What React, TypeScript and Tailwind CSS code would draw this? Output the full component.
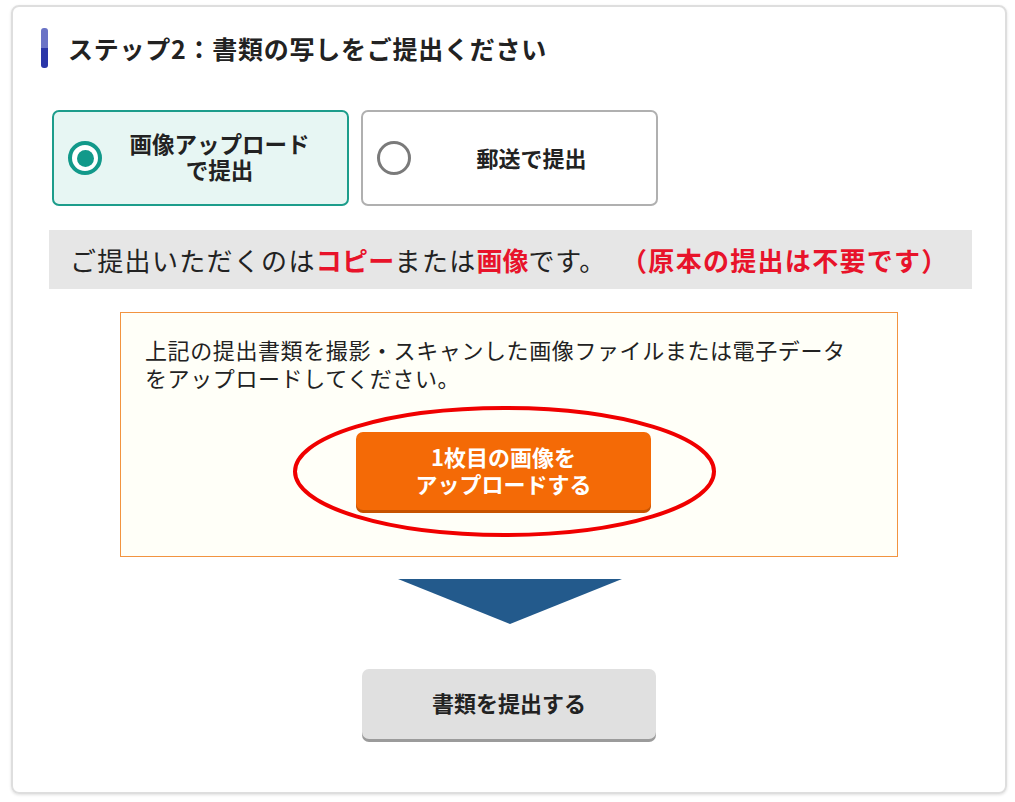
import React from "react";

const font = { fontFamily: "'Noto Sans CJK JP', 'Noto Sans', sans-serif" };

function Radio({ checked }: { checked: boolean }) {
  if (checked) {
    return (
      <div className="w-[34px] h-[34px] shrink-0 rounded-full border-[4px] border-[#12998a] bg-white flex items-center justify-center">
        <div className="w-[17px] h-[17px] rounded-full bg-[#12998a]" />
      </div>
    );
  }
  return <div className="w-[34px] h-[34px] shrink-0 rounded-full border-[3px] border-[#7a7a7a] bg-white" />;
}

export default function App() {
  return (
    <div className="w-[1015px] h-[802px] bg-white pt-[5px] pl-[11px]" style={font}>
      <div className="w-[996px] h-[789px] border-2 border-[#dedede] rounded-[8px] shadow-[0_1px_3px_rgba(0,0,0,0.12)] flex flex-col text-[#222]">
        {/* heading */}
        <div className="flex items-center pt-[21px] pl-[28px]">
          <div className="w-[7px] h-[40px] rounded-[3px] overflow-hidden flex flex-col">
            <div className="flex-1 bg-[#6a73c6]" />
            <div className="flex-1 bg-[#2a36a8]" />
          </div>
          <h2 className="ml-[20px] text-[25px] leading-[40px] font-bold tracking-[0.75px]">
            ステップ2：書類の写しをご提出ください
          </h2>
        </div>

        {/* options */}
        <div className="flex gap-[12px] mt-[42px] ml-[39px]">
          <div className="w-[297px] h-[96px] rounded-[7px] border-2 border-[#1d9d8b] bg-[#e7f6f3] flex items-center pl-[14px]">
            <Radio checked />
            <div className="flex-1 text-center text-[22.5px] leading-[26px] font-bold pr-[10px] pb-[5px]">
              画像アップロード
              <br />
              で提出
            </div>
          </div>
          <div className="w-[297px] h-[96px] rounded-[7px] border-2 border-[#b0b0b0] bg-white flex items-center pl-[14px]">
            <Radio checked={false} />
            <div className="flex-1 text-center text-[22px] leading-[26px] font-bold pr-[4px] pb-[2px]">郵送で提出</div>
          </div>
        </div>

        {/* gray notice */}
        <div className="mt-[24px] ml-[36px] w-[923px] h-[59px] bg-[#e6e6e6] flex items-center pl-[21px] text-[26px] whitespace-nowrap">
          <span className="tracking-[1.3px]">ご提出いただくのは</span>
          <span className="font-bold text-[#e8132a] tracking-[0.3px]">コピー</span>
          <span className="tracking-[1.3px]">または</span>
          <span className="font-bold text-[#e8132a]">画像</span>
          <span className="tracking-[0.7px]">です。</span>
          <span className="ml-[15px] font-bold text-[#e8132a] tracking-[1.3px]">（原本の提出は不要です）</span>
        </div>

        {/* orange box */}
        <div className="mt-[23px] ml-[107px] w-[778px] h-[245px] border border-[#f29440] bg-[#fffff8] flex flex-col pt-[22px] px-[24px]">
          <p className="text-[22px] leading-[28px] tracking-[0.6px]">
            上記の提出書類を撮影・スキャンした画像ファイルまたは電子データ
            <br />
            をアップロードしてください。
          </p>
          <div className="relative mt-[41px] ml-[211px] w-[295px] h-[78px]">
            <button className="w-[295px] h-[78px] rounded-[7px] bg-[#f46a06] shadow-[0_3px_0_#c75300] text-white font-bold text-[22px] leading-[27px] pb-[2px]">
              1枚目の画像を
              <br />
              アップロードする
            </button>
            <svg
              className="absolute left-[-64px] top-[-27px] pointer-events-none"
              width="425"
              height="133"
              viewBox="0 0 425 133"
            >
              <ellipse cx="212.5" cy="66.5" rx="209.5" ry="63.5" fill="none" stroke="#f00000" strokeWidth="4" />
            </svg>
          </div>
        </div>

        {/* arrow */}
        <div className="mt-[22px] ml-[385px]">
          <svg width="224" height="45" viewBox="0 0 224 45">
            <polygon points="0,0 224,0 112,45" fill="#235a8c" />
          </svg>
        </div>

        {/* submit */}
        <div className="mt-[45px] ml-[349px]">
          <button className="w-[294px] h-[70px] rounded-[7px] bg-[#e0e0e0] shadow-[0_3px_0_#9b9b9b] text-[22px] font-bold text-[#222] pb-[3px]">
            書類を提出する
          </button>
        </div>
      </div>
    </div>
  );
}
